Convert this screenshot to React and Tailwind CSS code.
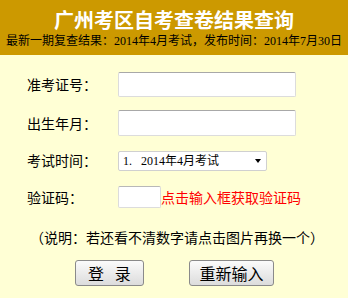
import React from 'react'

const cjk = { fontFamily: '"Noto Sans CJK SC", "Noto Sans", sans-serif' }
const mixed = { fontFamily: '"Liberation Serif", "Noto Sans CJK SC", serif' }

function Field({ label, children }) {
  return (
    <div className="flex items-center">
      <div className="w-[91px] text-[14px] text-black" style={cjk}>{label}</div>
      {children}
    </div>
  )
}

export default function App() {
  return (
    <div className="w-[348px] h-[298px] bg-[#ffffd5] overflow-hidden">
      {/* header */}
      <div className="h-[55px] bg-[#cc9900] flex flex-col items-center pt-[8px]">
        <h1 className="text-[20px] leading-[24px] font-bold text-white" style={cjk}>广州考区自考查卷结果查询</h1>
        <p className="text-[12px] leading-[16px] text-black mt-[1px] whitespace-nowrap" style={mixed}>
          最新一期复查结果：2014年4月考试，发布时间：2014年7月30日
        </p>
      </div>

      {/* form */}
      <div className="pl-[27px] pt-[17px] flex flex-col">
        <Field label="准考证号：">
          <div className="w-[178px] h-[25px] bg-white border border-[#dcdcdc] border-t-[#a8a8a8] rounded-[2px]" />
        </Field>
        <div className="mt-[13px]">
          <Field label="出生年月：">
            <div className="w-[178px] h-[26px] bg-white border border-[#dcdcdc] border-t-[#a8a8a8] rounded-[2px]" />
          </Field>
        </div>
        <div className="mt-[14px]">
          <Field label="考试时间：">
            <div className="w-[149px] h-[20px] bg-white border border-[#d0d0d0] rounded-[2px] flex items-center justify-between pl-[4px] pr-[5px]">
              <span className="text-[12px] leading-none text-black" style={mixed}>
                <span className="mr-[9px]">1.</span>2014年4月考试
              </span>
              <span className="w-0 h-0 border-l-[3px] border-r-[3px] border-t-[4px] border-l-transparent border-r-transparent border-t-black" />
            </div>
          </Field>
        </div>
        <div className="mt-[15px]">
          <Field label="验证码：">
            <div className="w-[43px] h-[22px] bg-white border border-[#dcdcdc] border-t-[#b8b8b8] rounded-[2px]" />
            <span className="text-[14px] text-[#ff0000] leading-none" style={cjk}>点击输入框获取验证码</span>
          </Field>
        </div>
      </div>

      <p className="mt-[19px] pl-[30px] text-[14px] leading-[20px] text-black whitespace-nowrap" style={cjk}>
        （说明：若还看不清数字请点击图片再换一个）
      </p>

      <div className="mt-[13px] flex pl-[75px] gap-[45px]">
        <button className="w-[69px] h-[26px] border border-[#8a8a8a] rounded-[3px] bg-gradient-to-b from-[#fbfbfb] to-[#dcdcdc] text-[16px] leading-none text-black" style={cjk}>
          登&nbsp;&nbsp;&nbsp;录
        </button>
        <button className="w-[85px] h-[26px] border border-[#8a8a8a] rounded-[3px] bg-gradient-to-b from-[#fbfbfb] to-[#dcdcdc] text-[16px] leading-none text-black" style={cjk}>
          重新输入
        </button>
      </div>
    </div>
  )
}
